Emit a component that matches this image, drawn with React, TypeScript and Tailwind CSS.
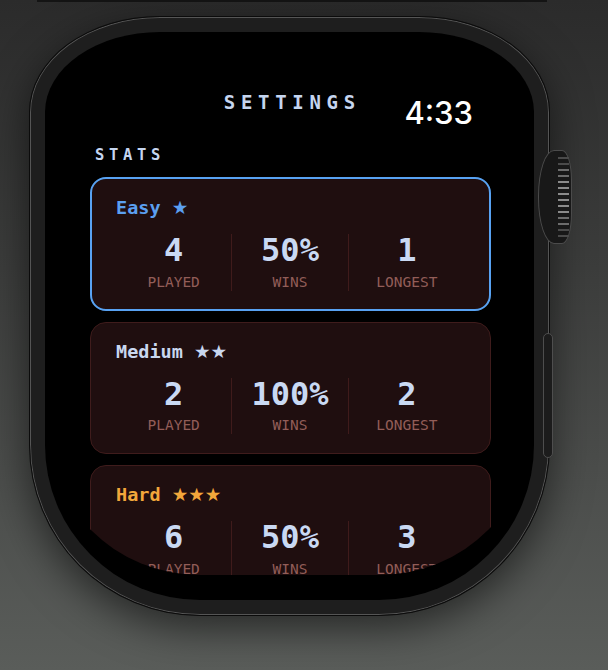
type Stat = { value: string; label: string }

type Level = {
  name: string
  stars: string
  titleColor: string
  selected: boolean
  stats: Stat[]
}

const LEVELS: Level[] = [
  {
    name: "Easy",
    stars: "★",
    titleColor: "text-[#5b9ff0]",
    selected: true,
    stats: [
      { value: "4", label: "PLAYED" },
      { value: "50%", label: "WINS" },
      { value: "1", label: "LONGEST" },
    ],
  },
  {
    name: "Medium",
    stars: "★★",
    titleColor: "text-[#c9d7ef]",
    selected: false,
    stats: [
      { value: "2", label: "PLAYED" },
      { value: "100%", label: "WINS" },
      { value: "2", label: "LONGEST" },
    ],
  },
  {
    name: "Hard",
    stars: "★★★",
    titleColor: "text-[#f2a73b]",
    selected: false,
    stats: [
      { value: "6", label: "PLAYED" },
      { value: "50%", label: "WINS" },
      { value: "3", label: "LONGEST" },
    ],
  },
]

function StatCard({ level }: { level: Level }) {
  return (
    <div
      className={
        level.selected
          ? "rounded-[16px] border-2 border-[#58a2f2] bg-[#1f0e0f] px-6 pt-[17px] pb-[18px]"
          : "rounded-[16px] border border-[#3f1c1c] bg-[#1f0e0f] px-[25px] pt-[17px] pb-[19px]"
      }
    >
      <div className={`text-[18.5px] font-bold leading-[24px] ${level.titleColor}`}>
        {level.name} <span className="font-['DejaVu_Sans',sans-serif] font-normal">{level.stars}</span>
      </div>
      <div className="mt-[14px] grid grid-cols-3 divide-x divide-[#3f1b1b]">
        {level.stats.map((s) => (
          <div key={s.label} className="flex flex-col items-center">
            <div className="text-[32px] font-bold leading-[32px] text-[#c9d9f3]">{s.value}</div>
            <div className="mt-[6.5px] text-[14.5px] leading-[18px] text-[#925d58]">{s.label}</div>
          </div>
        ))}
      </div>
    </div>
  )
}

function Crown() {
  const ridges = Array.from({ length: 14 })
  return (
    <div className="absolute left-[509px] top-[134px] flex h-[94px] w-[34px] items-center justify-end rounded-l-[16px_46px] rounded-r-[10px_30px] border border-[#4b4b4b] bg-[#181818] pr-[2px]">
      <div className="flex flex-col gap-[4px]">
        {ridges.map((_, i) => (
          <div
            key={i}
            className={
              i < 2 || i > 11
                ? "h-[2px] w-[11px] bg-[#4a4a4a]"
                : i < 4 || i > 9
                  ? "h-[2px] w-[11px] bg-[#6c6c6c]"
                  : "h-[2px] w-[11px] bg-[#8a8a8a]"
            }
          />
        ))}
      </div>
    </div>
  )
}

export default function App() {
  return (
    <div className="relative h-[670px] w-[608px] overflow-hidden bg-[linear-gradient(180deg,#2b2b2b_0%,#3c3d3c_40%,#5a5d5a_100%)] font-['DejaVu_Sans_Mono',monospace]">
      <div className="ml-[37px] h-[2px] w-[510px] bg-[#141414]" />
      <div className="relative ml-[29px] mt-[14px] w-[545px]">
        <div className="h-[600px] w-[521px] rounded-[131px_131px_171px_171px/96px_96px_171px_171px] border border-[#0b0b0b] bg-[#1e1e1e] p-[15px] shadow-[inset_0_0_0_1px_#555,0_12px_40px_rgba(0,0,0,0.55)]">
          <div className="h-full w-full overflow-hidden rounded-[115px_115px_155px_155px/80px_80px_155px_155px] bg-black">
            <div className="h-[543px] overflow-hidden rounded-b-[155px]">
              <div className="mt-[58px] grid grid-cols-[1fr_auto_1fr] items-start">
                <div />
                <div className="pl-[0.3em] text-[19px] font-bold leading-[24px] tracking-[0.3em] text-[#c5d5ef]">
                  SETTINGS
                </div>
                <div className="mt-[4px] justify-self-end pr-[61px] font-['Inter',sans-serif] text-[31px] font-medium leading-[37px] text-white">
                  4:33
                </div>
              </div>
              <div className="mt-[14px] pl-[50px] text-[15.5px] font-bold leading-[20px] tracking-[0.3em] text-[#c5d5ef]">
                STATS
              </div>
              <div className="mt-3 flex flex-col gap-[11px] pl-[45px] pr-[43px]">
                {LEVELS.map((l) => (
                  <StatCard key={l.name} level={l} />
                ))}
              </div>
            </div>
          </div>
        </div>
        <Crown />
        <div className="absolute left-[514px] top-[317px] h-[125px] w-[10px] rounded-full border border-[#4e4e4e] bg-[#1c1c1c]" />
      </div>
    </div>
  )
}
